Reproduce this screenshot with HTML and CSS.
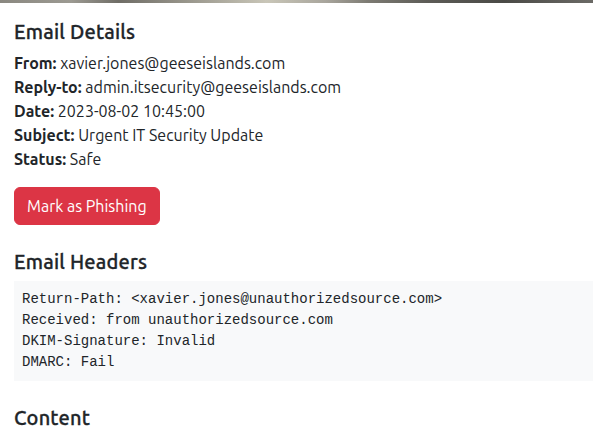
FILE: index.html
```html
<!DOCTYPE html>
<html lang="en">
<head>
<meta charset="utf-8">
<title>Email Details</title>
<link rel="stylesheet" href="styles.css">
</head>
<body>
<div class="banner"></div>
<main class="content">
  <section class="section">
    <h5 class="title">Email Details</h5>
    <div class="meta">
      <div><strong>From:</strong> xavier.jones@geeseislands.com</div>
      <div><strong>Reply-to:</strong> admin.itsecurity@geeseislands.com</div>
      <div><strong>Date:</strong> 2023-08-02 10:45:00</div>
      <div><strong>Subject:</strong> Urgent IT Security Update</div>
      <div><strong>Status:</strong> Safe</div>
    </div>
    <button class="btn-danger" type="button">Mark as Phishing</button>
  </section>
  <section class="section">
    <h5 class="title">Email Headers</h5>
    <pre class="headers">Return-Path: &lt;xavier.jones@unauthorizedsource.com&gt;
Received: from unauthorizedsource.com
DKIM-Signature: Invalid
DMARC: Fail</pre>
  </section>
  <section class="section">
    <h5 class="title">Content</h5>
  </section>
</main>
</body>
</html>
```
FILE: styles.css
```css
html, body {
  margin: 0;
  padding: 0;
  background: #fff;
}
body {
  font-family: Ubuntu, "Noto Sans", "Open Sans", sans-serif;
  font-size: 16px;
  line-height: 1.5;
  color: #212529;
  overflow: hidden;
  height: 426px;
}
.banner {
  height: 3px;
  background: linear-gradient(90deg, #8a8880 0%, #9c9a92 12%, #6f6d66 20%, #c9c6b8 45%, #a8a59c 55%, #7d7b73 62%, #5d5c57 72%, #4a4a46 85%, #6b6a66 100%);
}
.content {
  padding: 16px 0 0 14px;
  display: flex;
  flex-direction: column;
  gap: 24px;
}
.section {
  display: flex;
  flex-direction: column;
  align-items: flex-start;
}
.title {
  margin: 0 0 7px;
  padding-top: 1px;
  font-size: 20px;
  font-weight: 500;
  line-height: 1.2;
  letter-spacing: 0.2px;
  -webkit-text-stroke: 0.3px currentColor;
}
.meta {
  margin-bottom: 16px;
}
.meta strong {
  font-weight: 700;
}
.btn-danger {
  font-family: inherit;
  font-size: 16px;
  line-height: 1.5;
  color: #fff;
  background: #dc3545;
  border: 1px solid #dc3545;
  border-radius: 6px;
  padding: 6px 12px;
}
.headers {
  align-self: stretch;
  margin: 0;
  padding: 8px;
  background: #f8f9fa;
  font-family: "Liberation Mono", monospace;
  font-size: 14px;
  line-height: 1.5;
  color: #212529;
}
```
